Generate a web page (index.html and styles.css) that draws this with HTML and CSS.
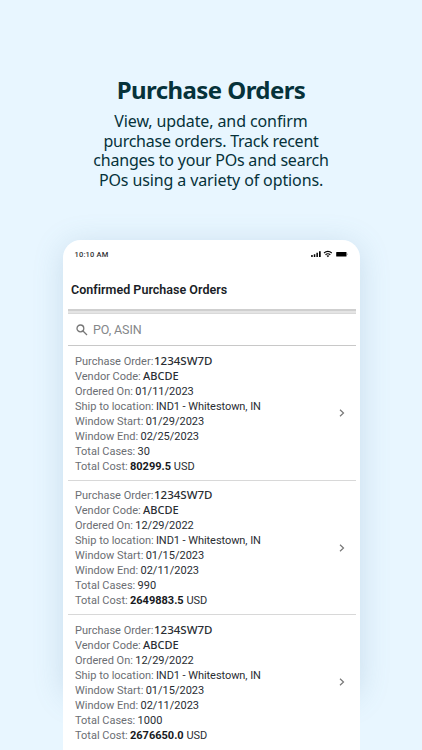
FILE: index.html
```html
<!DOCTYPE html>
<html lang="en">
<head>
<meta charset="utf-8">
<title>Purchase Orders</title>
<link rel="stylesheet" href="styles.css">
</head>
<body>
<main class="page">
  <header class="hero">
    <h1><span>Purchase Orders</span></h1>
    <p><span class="l1">View, update, and confirm</span><span class="l2">purchase orders. Track recent</span><span class="l3">changes to your POs and search</span><span class="l4">POs using a variety of options.</span></p>
  </header>
  <section class="phone">
    <div class="status">
      <span class="time">10:10 AM</span>
      <svg class="signals" width="38" height="8" viewBox="0 0 38 8">
        <path d="M1.2 5h1.5v2H1.2zM3.8 4.2h1.5V7H3.8zM6.4 2.8h1.5V7H6.4zM9 1.2h1.7V7H9z"/>
        <path d="M14 3Q17.9-.1 21.8 3M15.5 4.7Q17.9 2.8 20.3 4.7" fill="none" stroke="#000" stroke-width="1.2"/>
        <path d="M16.5 5.7Q17.9 4.9 19.3 5.7L17.9 7.2z"/>
        <rect x="26.2" y="1.9" width="10.3" height="4.6" rx=".6"/><path d="M37 3.4h.6V5H37z" opacity=".4"/>
      </svg>
    </div>
    <h2><span>Confirmed Purchase Orders</span></h2>
    <div class="band"></div>
    <div class="search">
      <svg width="12" height="12" viewBox="0 0 12 12"><circle cx="4.4" cy="4.4" r="3.4"/><path d="M7 7l4 4"/></svg>
      <span>PO, ASIN</span>
    </div>
    <div class="orders">
      <article class="order">
        <dl>
          <div><dt>Purchase Order:</dt><dd class="id">1234SW7D</dd></div>
          <div><dt>Vendor Code:</dt><dd class="vendor">ABCDE</dd></div>
          <div><dt>Ordered On:</dt><dd>01/11/2023</dd></div>
          <div><dt>Ship to location:</dt><dd class="place">IND1 - Whitestown, IN</dd></div>
          <div><dt>Window Start:</dt><dd>01/29/2023</dd></div>
          <div><dt>Window End:</dt><dd>02/25/2023</dd></div>
          <div><dt>Total Cases:</dt><dd>30</dd></div>
          <div><dt>Total Cost:</dt><dd><b>80299.5</b> USD</dd></div>
        </dl>
        <svg class="chev" width="6" height="8" viewBox="0 0 6 8"><path d="M1 .7L4.5 4 1 7.3"/></svg>
      </article>
      <article class="order">
        <dl>
          <div><dt>Purchase Order:</dt><dd class="id">1234SW7D</dd></div>
          <div><dt>Vendor Code:</dt><dd class="vendor">ABCDE</dd></div>
          <div><dt>Ordered On:</dt><dd>12/29/2022</dd></div>
          <div><dt>Ship to location:</dt><dd class="place">IND1 - Whitestown, IN</dd></div>
          <div><dt>Window Start:</dt><dd>01/15/2023</dd></div>
          <div><dt>Window End:</dt><dd>02/11/2023</dd></div>
          <div><dt>Total Cases:</dt><dd>990</dd></div>
          <div><dt>Total Cost:</dt><dd><b>2649883.5</b> USD</dd></div>
        </dl>
        <svg class="chev" width="6" height="8" viewBox="0 0 6 8"><path d="M1 .7L4.5 4 1 7.3"/></svg>
      </article>
      <article class="order">
        <dl>
          <div><dt>Purchase Order:</dt><dd class="id">1234SW7D</dd></div>
          <div><dt>Vendor Code:</dt><dd class="vendor">ABCDE</dd></div>
          <div><dt>Ordered On:</dt><dd>12/29/2022</dd></div>
          <div><dt>Ship to location:</dt><dd class="place">IND1 - Whitestown, IN</dd></div>
          <div><dt>Window Start:</dt><dd>01/15/2023</dd></div>
          <div><dt>Window End:</dt><dd>02/11/2023</dd></div>
          <div><dt>Total Cases:</dt><dd>1000</dd></div>
          <div><dt>Total Cost:</dt><dd><b>2676650.0</b> USD</dd></div>
        </dl>
        <svg class="chev" width="6" height="8" viewBox="0 0 6 8"><path d="M1 .7L4.5 4 1 7.3"/></svg>
      </article>
    </div>
  </section>
</main>
</body>
</html>
```

FILE: styles.css
```css
* { box-sizing: border-box; }
body { margin: 0; background: #e8f6ff; font-family: Roboto, "Liberation Sans", sans-serif; }
h1, h2, p, dl, dd { margin: 0; }
.page { width: 422px; height: 750px; overflow: hidden; display: flex; flex-direction: column; align-items: center; position: relative; z-index: 0; }
.hero { height: 240px; flex: none; padding-top: 74px; text-align: center; color: #06323a; font-family: "Noto Sans", sans-serif; }
.hero h1 { font-size: 24px; line-height: 32px; font-weight: 700; letter-spacing: -0.57px; }
.hero p { margin-top: 6.4px; font-size: 16px; line-height: 19.4px; white-space: nowrap; }
.hero p span { display: block; }
.l1 { letter-spacing: -.1px; }
.l2 { letter-spacing: -.25px; }
.l3 { letter-spacing: -.21px; }
.l4 { letter-spacing: -.12px; }
.phone { position: relative; width: 297px; height: 560px; flex: none; background: #fff; border-radius: 18px 18px 0 0; padding: 0 4px 0 5px; }
/* soft shadow that fades out before the bottom of the screen */
.phone::before { content: ""; position: absolute; z-index: -1; left: 0; top: 0; width: 297px; height: 455px; border-radius: 18px; box-shadow: 0 4px 30px rgba(90, 135, 170, .22); }
.status { height: 28px; display: flex; justify-content: space-between; padding: 9px 8px 0 7px; }
.time { font-size: 7.5px; line-height: 12px; font-weight: 500; color: #333; letter-spacing: .2px; }
.signals { margin-top: 1px; }
.phone h2 { height: 41px; padding-left: 3.5px; font-size: 12.5px; line-height: 43px; font-weight: 600; color: #191d26; letter-spacing: .02px; }
.band { height: 5px; background: linear-gradient(#cfcfcf 0 2px, #e4e4e4 2px 4px, #d9d9d9 4px); }
.search { height: 32px; display: flex; align-items: center; gap: 5px; padding-left: 8.5px; border-bottom: 1px solid #c8c8c8; font-size: 12.5px; color: #85878a; }
.search svg { fill: none; stroke: #777; stroke-width: 1.3; }
.search span { letter-spacing: -.1px; }
.order { height: 134.7px; display: flex; align-items: center; justify-content: space-between; padding: 1px 11px 0 7.5px; border-bottom: 1px solid #d8d8d8; }
.order:last-child { border-bottom-color: transparent; }
.order dl { font-size: 11px; line-height: 15px; color: #292d33; padding-top: .4px; }
.order dl > div { display: flex; gap: 2.3px; height: 15px; white-space: nowrap; }
dt { color: #6b6e73; }
.id, .vendor { font-family: "Noto Sans", sans-serif; font-weight: 500; line-height: 14px; }
.id { margin-left: -1.6px; font-size: 11.5px; }
.place { letter-spacing: -.06px; }
.order b { font-weight: 700; color: #17191d; }
.chev { fill: none; stroke: #777; stroke-width: 1.2; margin-top: -1px; }
```
